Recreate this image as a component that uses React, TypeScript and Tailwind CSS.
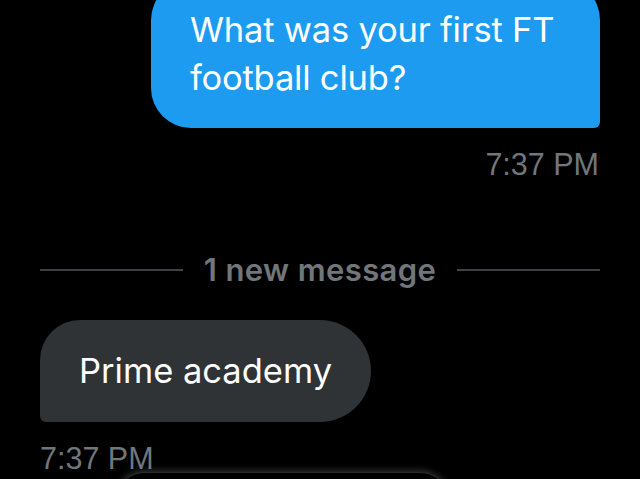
import React from "react";

export default function App() {
  return (
    <div className="w-[640px] h-[479px] bg-black overflow-hidden relative flex flex-col" style={{ fontFamily: "Inter, 'Liberation Sans', sans-serif" }}>
      <div className="self-end mr-[40px] mt-[-20px] w-[449px] h-[148px] bg-[#1d9bf0] rounded-tl-[40px] rounded-tr-[40px] rounded-bl-[40px] rounded-br-[6px] pl-[39px] pt-[26px]">
        <p className="text-white text-[34.5px] leading-[48px] tracking-[-0.2px]" style={{ fontFamily: "Inter, sans-serif" }}>
          What was your first FT<br />football club?
        </p>
      </div>
      <div className="self-end mr-[41px] mt-[19px] text-[30.5px] leading-[34px] text-[#71767b]" style={{ fontFamily: "'Liberation Sans', Arial, sans-serif" }}>
        7:37 PM
      </div>
      <div className="flex items-center mt-[72px] px-[40px] gap-[21px]">
        <div className="flex-1 h-[2px] bg-[#3e4144]" />
        <span className="text-[31px] leading-[34px] font-semibold text-[#71767b] tracking-[0.4px]">1 new message</span>
        <div className="flex-1 h-[2px] bg-[#3e4144]" />
      </div>
      <div className="ml-[40px] mt-[33px] w-[331px] h-[102px] bg-[#2f3336] rounded-tl-[40px] rounded-tr-[51px] rounded-br-[51px] rounded-bl-[6px] flex items-center pl-[39px]">
        <span className="text-white text-[34.5px] leading-[40px]">Prime academy</span>
      </div>
      <div className="ml-[40px] mt-[19px] text-[30.5px] leading-[34px] text-[#71767b]" style={{ fontFamily: "'Liberation Sans', Arial, sans-serif" }}>
        7:37 PM
      </div>
      <div className="absolute left-[115px] top-[472px] w-[335px] h-[60px] rounded-[30px] bg-black shadow-[0_-2px_6px_rgba(255,255,255,0.18)] border-t border-[#2a2a2a]" />
    </div>
  );
}
